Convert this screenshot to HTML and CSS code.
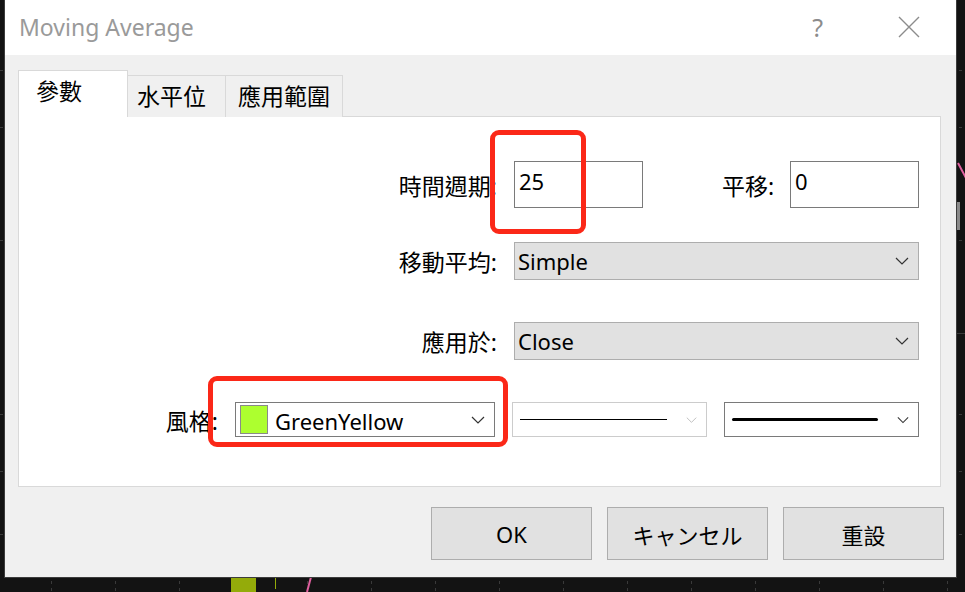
FILE: index.html
```html
<!DOCTYPE html>
<html lang="zh-Hant">
<head>
    <meta charset="UTF-8">
    <meta name="viewport" content="width=device-width, initial-scale=1.0">
    <title>Moving Average</title>
    <link rel="stylesheet" href="styles.css">
</head>
<body>
    <!-- gráfico detrás del diálogo -->
    <svg class="chart" width="965" height="592" viewBox="0 0 965 592">
        <g stroke="#3a3a3a" stroke-width="1" stroke-dasharray="3 4">
            <line x1="51.5" y1="0" x2="51.5" y2="592"/>
            <line x1="115.5" y1="0" x2="115.5" y2="592"/>
            <line x1="179.5" y1="0" x2="179.5" y2="592"/>
            <line x1="243.5" y1="0" x2="243.5" y2="592"/>
            <line x1="307.5" y1="0" x2="307.5" y2="592"/>
            <line x1="371.5" y1="0" x2="371.5" y2="592"/>
            <line x1="435.5" y1="0" x2="435.5" y2="592"/>
            <line x1="499.5" y1="0" x2="499.5" y2="592"/>
            <line x1="563.5" y1="0" x2="563.5" y2="592"/>
            <line x1="627.5" y1="0" x2="627.5" y2="592"/>
            <line x1="691.5" y1="0" x2="691.5" y2="592"/>
            <line x1="755.5" y1="0" x2="755.5" y2="592"/>
            <line x1="819.5" y1="0" x2="819.5" y2="592"/>
            <line x1="883.5" y1="0" x2="883.5" y2="592"/>
            <line x1="947.5" y1="0" x2="947.5" y2="592"/>
            <line x1="0" y1="70.5" x2="965" y2="70.5"/>
            <line x1="0" y1="127.5" x2="965" y2="127.5"/>
            <line x1="0" y1="240.5" x2="965" y2="240.5"/>
            <line x1="0" y1="414.5" x2="965" y2="414.5"/>
            <line x1="0" y1="471.5" x2="965" y2="471.5"/>
            <line x1="0" y1="534.5" x2="965" y2="534.5"/>
        </g>
        <line x1="957" y1="333.5" x2="965" y2="333.5" stroke="#3a3a3a"/>
        <rect x="231" y="570" width="25" height="22" fill="#94ab0a"/>
        <line x1="275.5" y1="570" x2="275.5" y2="589" stroke="#94ab0a"/>
        <line x1="307" y1="592" x2="311" y2="577" stroke="#e0609f" stroke-width="2"/>
        <line x1="958" y1="163" x2="966" y2="178" stroke="#e0609f" stroke-width="2"/>
        <rect x="957" y="202" width="3" height="28" fill="#8a8a8a"/>
    </svg>

    <div class="dialog">
        <div class="titlebar">
            <span class="title">Moving Average</span>
            <span class="help">?</span>
            <svg class="close" width="22" height="22" viewBox="0 0 22 22">
                <path d="M1 1 L21 21 M21 1 L1 21" stroke="#8c8c8c" stroke-width="1.4" fill="none"/>
            </svg>
        </div>

        <div class="body">
            <div class="tabs">
                <div class="tab active">參數</div>
                <div class="tab tab-levels">水平位</div>
                <div class="tab tab-range">應用範圍</div>
            </div>

            <div class="panel">
                <div class="row row-period">
                    <span class="label">時間週期:</span>
                    <div class="field">25</div>
                    <span class="label shift-label">平移:</span>
                    <div class="field">0</div>
                </div>

                <div class="row row-method">
                    <span class="label">移動平均:</span>
                    <div class="select wide">
                        <span>Simple</span>
                        <svg class="chevron" width="14" height="8" viewBox="0 0 14 8"><path d="M1 1 L7 7 L13 1"/></svg>
                    </div>
                </div>

                <div class="row row-apply">
                    <span class="label">應用於:</span>
                    <div class="select wide">
                        <span>Close</span>
                        <svg class="chevron" width="14" height="8" viewBox="0 0 14 8"><path d="M1 1 L7 7 L13 1"/></svg>
                    </div>
                </div>

                <div class="row row-style">
                    <span class="label">風格:</span>
                    <div class="select color-select">
                        <span class="swatch"></span>
                        <span class="color-name">GreenYellow</span>
                        <svg class="chevron" width="14" height="8" viewBox="0 0 14 8"><path d="M1 1 L7 7 L13 1"/></svg>
                    </div>
                    <div class="select line-select disabled">
                        <span class="line thin"></span>
                        <svg class="chevron" width="14" height="8" viewBox="0 0 14 8"><path d="M1 1 L7 7 L13 1"/></svg>
                    </div>
                    <div class="select line-select">
                        <span class="line thick"></span>
                        <svg class="chevron" width="14" height="8" viewBox="0 0 14 8"><path d="M1 1 L7 7 L13 1"/></svg>
                    </div>
                </div>
            </div>

            <div class="buttons">
                <div class="btn">OK</div>
                <div class="btn">キャンセル</div>
                <div class="btn">重設</div>
            </div>
        </div>

        <!-- marcas rojas de la captura -->
        <div class="mark mark-period"></div>
        <div class="mark mark-style"></div>
    </div>
</body>
</html>
```

FILE: styles.css
```css
* {
    margin: 0;
    padding: 0;
    box-sizing: border-box;
}

body {
    width: 965px;
    height: 592px;
    overflow: hidden;
    background: #131313;
    font-family: "Noto Sans", "Noto Sans CJK TC", sans-serif;
    color: #000;
    position: relative;
}

.chart {
    position: absolute;
    left: 0;
    top: 0;
}

.dialog {
    position: relative;
    margin-left: 4px;
    width: 953px;
    height: 578px;
    border: 1px solid #3c3c3c;
    border-top: none;
    background: #f0f0f0;
}

.titlebar {
    height: 55px;
    background: #fff;
    display: flex;
    align-items: center;
    padding-left: 14px;
    padding-bottom: 2px;
}

.title {
    font-size: 23px;
    color: #9a9a9a;
    flex: 1;
}

.help {
    font-size: 25px;
    color: #8c8c8c;
    margin-right: 75px;
}

.close {
    margin-right: 36px;
}

.body {
    padding: 16px 12px 0 13px;
}

.tabs {
    display: flex;
    align-items: flex-end;
    height: 46px;
    margin-bottom: -1px;
    position: relative;
    z-index: 1;
}

.tab {
    height: 42px;
    font-size: 23px;
    line-height: 40px;
    border: 1px solid #d9d9d9;
    border-bottom: none;
    background: #f0f0f0;
    margin-left: -1px;
}

.tab.active {
    height: 47px;
    width: 110px;
    margin-left: 0;
    padding-left: 17px;
    line-height: 40px;
    background: #fff;
    position: relative;
    z-index: 2;
}

.tab-levels {
    width: 99px;
    padding-left: 9px;
}

.tab-range {
    width: 118px;
    padding-left: 12px;
}

.panel {
    width: 923px;
    height: 371px;
    background: #fff;
    border: 1px solid #d9d9d9;
    padding: 44px 21px 0 0;
}

.row {
    display: flex;
    justify-content: flex-end;
    align-items: center;
}

.row-method {
    margin-top: 34px;
}

.row-apply {
    margin-top: 42px;
}

.row-style {
    margin-top: 42px;
}

.label {
    font-size: 23px;
    margin-right: 17px;
    white-space: nowrap;
}

.shift-label {
    width: 68px;
    margin-left: 79px;
    margin-right: 0;
}

.field {
    width: 129px;
    height: 47px;
    border: 1px solid #7a7a7a;
    font-size: 22px;
    padding: 4px 0 0 4px;
}

.select {
    height: 38px;
    border: 1px solid #adadad;
    background: #e1e1e1;
    display: flex;
    align-items: center;
    font-size: 22px;
    padding: 0 9px 0 3px;
}

.select span:first-child {
    flex: 1;
}

.select.wide {
    width: 405px;
}

.chevron {
    width: 14px;
    height: 8px;
}

.chevron path {
    fill: none;
    stroke: #333;
    stroke-width: 1.2;
}

.row-style .select {
    height: 35px;
    background: #fff;
    border-color: #7a7a7a;
}

.color-select {
    width: 260px;
    margin-right: 17px;
    padding-left: 4px;
}

.swatch {
    flex: none !important;
    width: 28px;
    height: 29px;
    background: #adff2f;
    border: 1px solid #8a8a8a;
    margin-right: 7px;
}

.color-name {
    flex: 1;
    padding-top: 2px;
}

.line-select {
    width: 195px;
    padding-left: 7px;
}

.line-select + .line-select {
    margin-left: 17px;
}

.line-select.disabled {
    border-color: #cccccc;
}

.line-select.disabled .chevron path {
    stroke: #bdbdbd;
}

.line {
    flex: none !important;
    height: 1px;
    background: #000;
}

.line.thin {
    width: 147px;
    margin-right: 19px;
}

.line.thick {
    width: 146px;
    height: 3px;
    border-radius: 2px;
    margin-right: 19px;
}

.buttons {
    display: flex;
    justify-content: flex-end;
    gap: 15px;
    margin-top: 20px;
}

.btn {
    width: 161px;
    height: 53px;
    background: #e1e1e1;
    border: 1px solid #adadad;
    font-size: 22px;
    display: flex;
    align-items: center;
    justify-content: center;
}

.mark {
    position: absolute;
    border: 5px solid #fb2818;
    border-radius: 9px;
    z-index: 5;
}

.mark-period {
    left: 485px;
    top: 130px;
    width: 96px;
    height: 104px;
}

.mark-style {
    left: 203px;
    top: 376px;
    width: 300px;
    height: 71px;
}
```
